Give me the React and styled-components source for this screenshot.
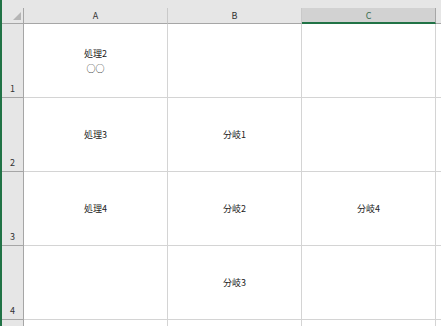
import React from 'react'
import styled, { createGlobalStyle } from 'styled-components'

const Global = createGlobalStyle`
  html, body {
    margin: 0;
    padding: 0;
    background: #fff;
    overflow: hidden;
  }
  body {
    font-family: "Noto Sans CJK JP", "Liberation Sans", sans-serif;
  }
`

// D and row 5 only peek in at the edge, so they carry no label
const columns = [
  { key: 'A', width: 144, label: 'A' },
  { key: 'B', width: 134, label: 'B' },
  { key: 'C', width: 134, label: 'C', selected: true },
  { key: 'D', width: 134, label: '' },
]

const rows = [
  { label: '1', cells: ['処理2\n○○', '', '', ''] },
  { label: '2', cells: ['処理3', '分岐1', '', ''] },
  { label: '3', cells: ['処理4', '分岐2', '分岐4', ''] },
  { label: '4', cells: ['', '分岐3', '', ''] },
  { label: '', cells: ['', '', '', ''] },
]

function App() {
  return (
    <>
      <Global />
      <Sheet>
        <TopStrip />
        <Grid $cols={columns.map(c => c.width + 'px').join(' ')}>
          <Corner>
            <svg width="8" height="8" viewBox="0 0 8 8">
              <polygon points="8,0 8,8 0,8" fill="#b5b5b5" />
            </svg>
          </Corner>
          {columns.map(c => (
            <ColHead key={c.key} $selected={c.selected}>{c.label}</ColHead>
          ))}
          {rows.map((r, i) => (
            <React.Fragment key={i}>
              <RowHead>{r.label}</RowHead>
              {r.cells.map((v, j) => (
                <Cell key={j}>{v}</Cell>
              ))}
            </React.Fragment>
          ))}
        </Grid>
      </Sheet>
    </>
  )
}

export default App

const Sheet = styled.div`
  width: 441px;
  height: 326px;
  overflow: hidden;
  border-left: 2px solid #217346;
  box-sizing: border-box;
  background: #fff;
`

const TopStrip = styled.div`
  height: 8px;
  background: #e6e6e6;
`

const Grid = styled.div`
  display: grid;
  grid-template-columns: 22px ${p => p.$cols};
  grid-template-rows: 16px repeat(5, 74px);
  font-size: 9px;
  color: #222;
`

const Corner = styled.div`
  background: #e6e6e6;
  border-right: 1px solid #a6a6a6;
  border-bottom: 1px solid #a6a6a6;
  display: flex;
  align-items: flex-end;
  justify-content: flex-end;
  padding: 0 2px 3px 0;
  box-sizing: border-box;
`

const ColHead = styled.div`
  background: ${p => (p.$selected ? '#d2d2d2' : '#e6e6e6')};
  color: ${p => (p.$selected ? '#3a6e50' : '#333')};
  border-right: 1px solid ${p => (p.$selected ? '#a6a6a6' : '#c9c9c9')};
  border-bottom: ${p => (p.$selected ? '2px solid #217346' : '1px solid #a6a6a6')};
  display: flex;
  align-items: center;
  justify-content: center;
  line-height: 11px;
  box-sizing: border-box;
  padding-top: ${p => (p.$selected ? '1px' : '0')};
`

const RowHead = styled.div`
  background: #e6e6e6;
  color: #333;
  border-right: 1px solid #a6a6a6;
  border-bottom: 1px solid #a6a6a6;
  display: flex;
  align-items: flex-end;
  justify-content: center;
  line-height: 11px;
  padding-bottom: 3px;
  box-sizing: border-box;
`

const Cell = styled.div`
  border-right: 1px solid #d4d4d4;
  border-bottom: 1px solid #d4d4d4;
  display: flex;
  align-items: center;
  justify-content: center;
  text-align: center;
  white-space: pre-line;
  line-height: 15px;
  box-sizing: border-box;
`
